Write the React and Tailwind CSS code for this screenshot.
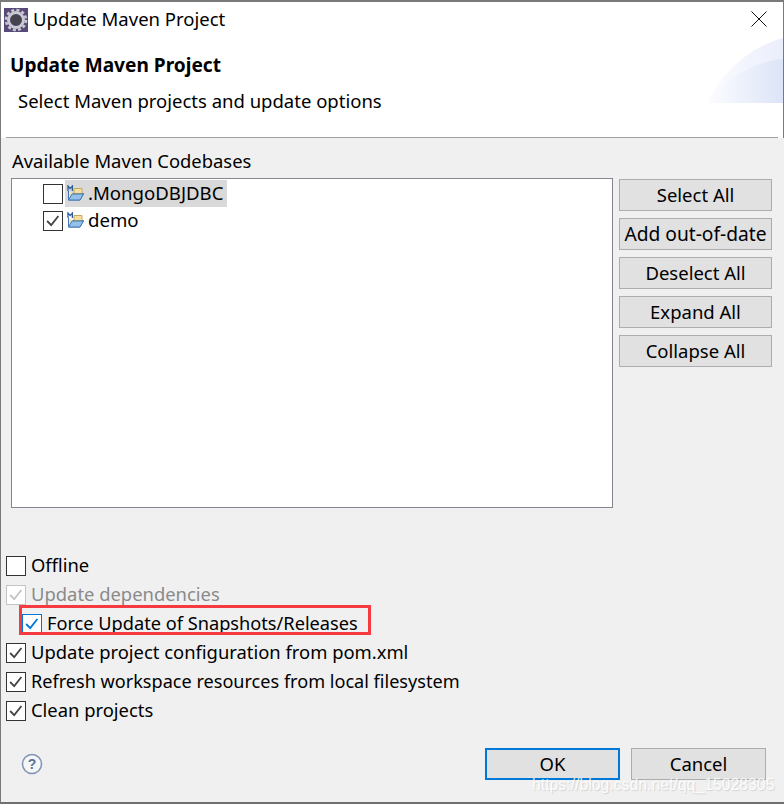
import React from "react";

const font = { fontFamily: '"Noto Sans", "Open Sans", sans-serif' };

function Check({ color = "#333333" }) {
  return (
    <svg viewBox="0 0 20 20" className="w-full h-full block">
      <path d="M3.5 10 L8 14.5 L16 4.5" fill="none" stroke={color} strokeWidth="2" />
    </svg>
  );
}

function Box({ checked, variant = "normal" }) {
  const border =
    variant === "disabled" ? "border-[#c4c4c4]" : variant === "focus" ? "border-[#0078d7]" : "border-[#333333]";
  const color = variant === "disabled" ? "#c4c4c4" : variant === "focus" ? "#0078d7" : "#444444";
  return (
    <span className={`w-5 h-5 shrink-0 border bg-white box-border block ${border}`}>
      {checked && <Check color={color} />}
    </span>
  );
}

function Option({ label, checked, variant, indent, size = "text-[18.4px]" }) {
  return (
    <div className={`flex items-center h-[29px] ${indent ? "pl-[21px]" : "pl-[5px]"}`}>
      <Box checked={checked} variant={variant} />
      <span className={`ml-[5px] leading-none whitespace-nowrap ${size} ${variant === "disabled" ? "text-[#8a8a8a]" : "text-black"}`}>
        {label}
      </span>
    </div>
  );
}

function SideButton({ label, size = "text-[18.5px]" }) {
  return (
    <button className={`w-[153px] h-[32px] bg-[#e1e1e1] border border-[#adadad] leading-none text-black whitespace-nowrap flex items-center justify-center ${size}`}>
      {label}
    </button>
  );
}

function FolderIcon() {
  return (
    <svg viewBox="0 0 18 18" className="w-[18px] h-[18px] shrink-0">
      <path d="M1.5 6 V15 H13 L16.5 8.5 H6" fill="#f6e6b4" stroke="#3f78b5" strokeWidth="1" />
      <path d="M7 3.5 H15 V8.5 H7 Z" fill="#f5dfa0" stroke="#c9a95a" strokeWidth="1" />
      <path d="M1.5 15 L5 9 H16.5 L13 15 Z" fill="#94c0ec" stroke="#3f78b5" strokeWidth="1" />
      <path d="M1 6 V1 L3.2 3.6 L5.4 1 V6" fill="none" stroke="#2b5d9b" strokeWidth="1.3" />
    </svg>
  );
}

function TreeRow({ label, checked, selected }) {
  return (
    <div className="flex items-center h-[27px] pl-[31px]">
      <Box checked={checked} />
      <div className={`flex items-center h-[27px] ml-[2px] pl-[2px] pr-[4px] ${selected ? "bg-[#d9d9d9]" : ""}`}>
        <FolderIcon />
        <span className="ml-[3px] text-[18.6px] leading-none text-black">{label}</span>
      </div>
    </div>
  );
}

function AppIcon() {
  return (
    <svg viewBox="0 0 24 24" className="w-6 h-6 shrink-0">
      <rect width="24" height="24" fill="#574a78" />
      <circle cx="12" cy="12" r="7.5" fill="none" stroke="#c9c9d2" strokeWidth="3" />
      <circle cx="12" cy="12" r="10" fill="none" stroke="#c9c9d2" strokeWidth="2.5" strokeDasharray="3 2.25" />
      <circle cx="12" cy="12" r="5.5" fill="#46434f" />
    </svg>
  );
}

export default function App() {
  return (
    <div style={font} className="relative w-[784px] h-[804px] overflow-hidden bg-[#f0f0f0] border-t-2 border-l border-b-2 border-t-[#7a7a7a] border-l-[#7a7a7a] border-b-[#6f6f6f] flex flex-col box-border">
      <div className="bg-white h-[136px] shrink-0 relative border-r border-[#7a7a7a]">
        <div className="flex items-center h-[35px] pl-[3px]">
          <AppIcon />
          <span className="ml-[5px] text-[18.5px] leading-none text-black">Update Maven Project</span>
        </div>
        <svg viewBox="0 0 16 16" className="absolute top-[9px] right-[16px] w-4 h-4">
          <path d="M0.5 0.5 L15.5 15.5 M15.5 0.5 L0.5 15.5" stroke="#111111" strokeWidth="1" fill="none" />
        </svg>
        <svg viewBox="0 0 75 66" className="absolute top-[35px] right-0 w-[75px] h-[66px]">
          <defs>
            <linearGradient id="g1" x1="0" x2="1" y1="0" y2="0">
              <stop offset="0" stopColor="#fcfcff" />
              <stop offset="1" stopColor="#eaeefb" />
            </linearGradient>
            <linearGradient id="g2" x1="0" x2="1" y1="0" y2="0">
              <stop offset="0" stopColor="#fbfcff" />
              <stop offset="1" stopColor="#dce4f7" />
            </linearGradient>
          </defs>
          <path d="M0 66 C10 40 40 10 75 1 V66 Z" fill="url(#g1)" />
          <path d="M2 66 C16 40 50 24 75 22 V66 Z" fill="url(#g2)" />
        </svg>
        <div className="pl-[9px] text-[19.1px] leading-none font-bold text-black h-[26px] flex items-center mt-[16px]">Update Maven Project</div>
        <div className="pl-[17px] text-[18.5px] leading-none text-black mt-[9px] h-[26px] flex items-center">Select Maven projects and update options</div>
        <div className="absolute bottom-0 left-[5px] right-[5px] h-px bg-[#a0a0a0]" />
      </div>

      <div className="flex-1 flex flex-col min-h-0">
        <div className="pl-[11px] pt-[13px] text-[18.4px] leading-none h-[40px] text-black flex items-start">
          <span className="mt-[1px]">Available Maven Codebases</span>
        </div>
        <div className="flex pl-[10px]">
          <div className="w-[602px] h-[330px] bg-white border border-[#828790] box-border pt-px">
            <TreeRow label=".MongoDBJDBC" selected />
            <TreeRow label="demo" checked />
          </div>
          <div className="ml-[6px] flex flex-col gap-[7px] pt-px">
            <SideButton label="Select All" />
            <SideButton label="Add out-of-date" size="text-[19.2px]" />
            <SideButton label="Deselect All" />
            <SideButton label="Expand All" />
            <SideButton label="Collapse All" />
          </div>
        </div>
        <div className="relative mt-[43px] flex flex-col">
          <Option label="Offline" />
          <Option label="Update dependencies" checked variant="disabled" />
          <Option label="Force Update of Snapshots/Releases" checked variant="focus" indent size="text-[18.2px]" />
          <Option label="Update project configuration from pom.xml" checked />
          <Option label="Refresh workspace resources from local filesystem" checked size="text-[18.1px]" />
          <Option label="Clean projects" checked />
          <div className="absolute left-[18px] top-[54px] w-[352px] h-[30px] border-[3px] border-[#f53a42] box-border" />
        </div>
        <div className="flex items-center mt-[23px] pl-[20px] pr-[18px]">
          <svg viewBox="0 0 22 22" className="w-[22px] h-[22px]">
            <circle cx="11" cy="11" r="9.5" fill="#f4f6fa" stroke="#7f93b2" strokeWidth="1.5" />
            <text x="11" y="16" textAnchor="middle" fontSize="14" fontWeight="700" fill="#5b7394" fontFamily="Liberation Sans, sans-serif">?</text>
          </svg>
          <div className="ml-auto flex gap-[11px]">
            <button className="w-[135px] h-[32px] bg-[#e1e1e1] border-2 border-[#0078d7] text-[18.5px] leading-none text-black flex items-center justify-center">OK</button>
            <button className="w-[135px] h-[32px] bg-[#e1e1e1] border border-[#adadad] text-[18.5px] leading-none text-black flex items-center justify-center">Cancel</button>
          </div>
        </div>
      </div>
      <div className="absolute left-[531px] top-[775px] text-[15.8px] leading-none text-white opacity-80 whitespace-nowrap [text-shadow:1px_1px_1px_rgba(0,0,0,0.15)]" style={{ fontFamily: '"Liberation Sans", sans-serif' }}>
        https://blog.csdn.net/qq_15028305
      </div>
    </div>
  );
}
